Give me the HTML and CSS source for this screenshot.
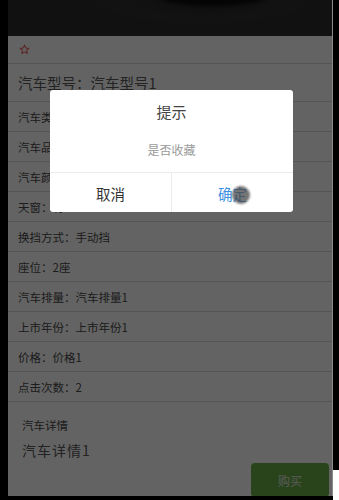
FILE: index.html
```html
<!DOCTYPE html>
<html lang="zh-CN">
<head>
  <meta charset="UTF-8">
  <meta name="viewport" content="width=device-width, initial-scale=1.0">
  <title>汽车详情</title>
  <link rel="stylesheet" href="styles.css">
</head>
<body>
  <div class="screen">
    <div class="banner"><div class="car-shadow"></div></div>

    <div class="detail">
      <div class="row star-row">
        <svg class="star" width="11" height="11" viewBox="0 0 24 24">
          <path d="M12 2.5l2.9 6.1 6.6.8-4.9 4.6 1.3 6.6L12 17.3l-5.9 3.3 1.3-6.6-4.9-4.6 6.6-.8z" fill="none" stroke="#e85b5b" stroke-width="2.2" stroke-linejoin="round"/>
        </svg>
      </div>
      <div class="row title-row">汽车型号：汽车型号1</div>
      <div class="row">汽车类型：汽车类型1</div>
      <div class="row">汽车品牌：汽车品牌1</div>
      <div class="row">汽车颜色：汽车颜色1</div>
      <div class="row">天窗：有</div>
      <div class="row">换挡方式：手动挡</div>
      <div class="row">座位：2座</div>
      <div class="row">汽车排量：汽车排量1</div>
      <div class="row">上市年份：上市年份1</div>
      <div class="row">价格：价格1</div>
      <div class="row">点击次数：2</div>

      <div class="info">
        <p class="info-label">汽车详情</p>
        <p class="info-text">汽车详情1</p>
        <div class="actions">
          <button class="buy">购买</button>
        </div>
      </div>
    </div>

    <!-- 遮罩层 -->
    <div class="mask"></div>
  </div>

  <!-- 弹窗 -->
  <div class="dialog">
    <div class="dialog-title">提示</div>
    <div class="dialog-msg">是否收藏</div>
    <div class="dialog-btns">
      <div class="dialog-btn cancel">取消</div>
      <div class="dialog-btn ok">确定<span class="touch"></span></div>
    </div>
  </div>

  <div class="bottom-strip"></div>
</body>
</html>
```

FILE: styles.css
```css
* {
  margin: 0;
  padding: 0;
  box-sizing: border-box;
}
body {
  width: 339px;
  height: 500px;
  overflow: hidden;
  background: #000;
  font-family: "Noto Sans CJK SC", "Noto Sans", sans-serif;
  position: relative;
}
/* 页面 */
.screen {
  position: relative;
  margin-left: 8px;
  width: 325px;
  height: 496px;
  overflow: hidden;
  border-right: 1px solid #8a8a8a;
}
.banner {
  height: 36px;
  background: radial-gradient(ellipse 140px 30px at 60% 0, #262626 0%, #303030 60%, #2c2c2c 100%);
  position: relative;
  overflow: hidden;
}
.car-shadow {
  position: absolute;
  left: 150px;
  top: -14px;
  width: 110px;
  height: 20px;
  border-radius: 50%;
  background: #0c0c0c;
  filter: blur(2px);
}
.detail {
  background: #fff;
  height: 460px;
}
.row {
  height: 30px;
  border-bottom: 1px solid #dcdcdc;
  padding-left: 10px;
  display: flex;
  align-items: center;
  font-size: 11.5px;
  color: #4a4a4a;
}
.star-row {
  height: 28px;
  padding-left: 11px;
}
.star {
  display: block;
}
.title-row {
  height: 38px;
  font-size: 14.5px;
  color: #5a5a5a;
}
/* 详情 */
.info {
  padding: 14px 14px 0;
}
.info-label {
  font-size: 11.5px;
  color: #4a4a4a;
  line-height: 18px;
}
.info-text {
  margin-top: 6px;
  font-size: 14px;
  letter-spacing: 1px;
  color: #5a5a5a;
  line-height: 20px;
}
.actions {
  display: flex;
  justify-content: flex-end;
  margin-top: 3px;
  margin-right: -11px;
}
.buy {
  width: 78px;
  height: 34px;
  border: none;
  border-radius: 4px;
  background: #69b045;
  color: #e6e6e6;
  font-size: 12px;
  font-family: inherit;
}
/* 遮罩 */
.mask {
  position: absolute;
  inset: 0;
  background: rgba(0, 0, 0, 0.61);
}
.bottom-strip {
  position: absolute;
  left: 333px;
  right: 0;
  top: 470px;
  bottom: 0;
  background: #fff;
}
/* 弹窗 */
.dialog {
  position: absolute;
  left: 50px;
  top: 90px;
  width: 243px;
  height: 122px;
  background: #fff;
  border-radius: 3px;
  text-align: center;
  overflow: hidden;
}
.dialog-title {
  margin-top: 11px;
  font-size: 15px;
  line-height: 22px;
  color: #444;
}
.dialog-msg {
  margin-top: 19px;
  font-size: 12px;
  line-height: 16px;
  color: #9a9a9a;
  padding-bottom: 14px;
  border-bottom: 1px solid #ececec;
}
.dialog-btns {
  display: flex;
  height: 40px;
}
.dialog-btn {
  flex: 1;
  display: flex;
  align-items: center;
  justify-content: center;
  font-size: 14.5px;
  position: relative;
}
.cancel {
  color: #333;
  border-right: 1px solid #ececec;
}
.ok {
  color: #3c8fe3;
}
.touch {
  position: absolute;
  left: 60px;
  top: 13px;
  width: 18px;
  height: 18px;
  border-radius: 50%;
  background: rgba(70, 70, 70, 0.75);
  filter: blur(1px);
}
```
